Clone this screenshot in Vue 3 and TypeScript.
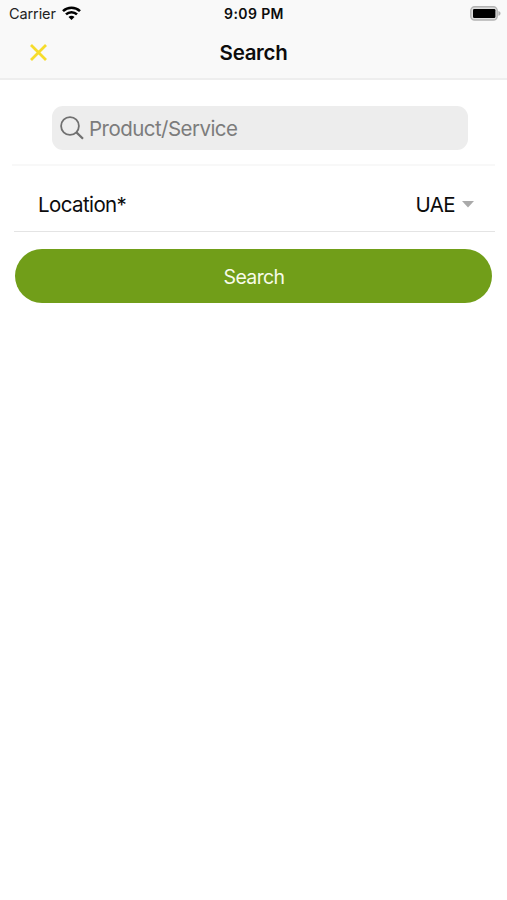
<script setup lang="ts">
import { ref } from 'vue'

const query = ref('')
const location = ref('UAE')
</script>

<template>
  <div class="screen">
    <header class="header">
      <div class="status">
        <div class="carrier">
          <span class="carrier-name">Carrier</span>
          <svg class="wifi" width="19" height="14" viewBox="0 0 19 14" fill="none" stroke="#000" stroke-width="2.6">
            <path d="M1 5.1C5.8.6 13.2.6 18 5.1" />
            <path d="M4 8.4C7 5.5 12 5.5 15 8.4" />
            <path d="M9.5 14L6.5 11C8.2 9.4 10.8 9.4 12.5 11Z" fill="#000" stroke="none" />
          </svg>
        </div>
        <span class="time">9:09 PM</span>
        <svg class="battery" width="31" height="15" viewBox="0 0 31 15">
          <rect x="0.8" y="0.8" width="26.4" height="13.2" rx="3.8" fill="#dedede" stroke="#b2b2b2" stroke-width="1.4" />
          <rect x="3" y="3" width="22.4" height="9" rx="1.2" fill="#000" />
          <path d="M28.4 5.1C31.2 6 31.2 8.8 28.4 9.7Z" fill="#aeaeae" />
        </svg>
      </div>
      <div class="navbar">
        <button class="close" type="button" aria-label="Close">
          <svg width="17" height="17" viewBox="0 0 17 17" fill="none" stroke="#f6dc2c" stroke-width="2.8">
            <path d="M1 1L16 16M16 1L1 16" />
          </svg>
        </button>
        <h1 class="title">Search</h1>
        <span></span>
      </div>
    </header>
    <main class="form">
      <div class="search-row">
        <label class="search-box">
          <svg width="24" height="24" viewBox="0 0 24 24" fill="none" stroke="#707070" stroke-width="1.8">
            <circle cx="10" cy="10" r="8.9" />
            <path d="M16.4 16.4L23 22.8" stroke-width="2.2" />
          </svg>
          <input v-model="query" class="search-input" type="text" placeholder="Product/Service" />
        </label>
      </div>
      <div class="location-row">
        <span class="location-label">Location*</span>
        <span class="location-value">{{ location }}</span>
        <svg class="caret" width="12" height="7" viewBox="0 0 12 7">
          <path d="M0 0H12L6 6.5Z" fill="#aaa" />
        </svg>
      </div>
      <button class="submit" type="button"><span class="submit-text">Search</span></button>
    </main>
  </div>
</template>

<style>
body {
  background: #fff;
}
</style>

<style scoped>
.screen {
  height: 900px;
  background: #fff;
  color: #0c0c0c;
  font-family: Inter, "Liberation Sans", sans-serif;
}
button {
  border: 0;
  font: inherit;
}
.header {
  box-sizing: border-box;
  height: 80px;
  background: #f9f9f9;
  border-bottom: 2px solid #eeeeee;
}
.status,
.navbar {
  display: grid;
  grid-template-columns: 1fr auto 1fr;
  align-items: center;
}
.status {
  height: 27px;
  padding: 0 6px 0 9px;
}
.carrier {
  display: flex;
  align-items: center;
  gap: 6px;
}
.carrier-name {
  font-size: 14.5px;
  line-height: 27px;
  letter-spacing: -0.1px;
  color: #222;
}
.wifi {
  margin-top: -2px;
}
.time {
  margin-right: 2px;
  font-size: 14px;
  font-weight: 600;
  letter-spacing: 0.4px;
}
.battery {
  justify-self: end;
}
.navbar {
  height: 50px;
  padding: 0 30px;
}
.close {
  width: 17px;
  height: 17px;
  padding: 0;
  background: none;
}
.close svg {
  display: block;
}
.title {
  margin: 0;
  padding-top: 1px;
  font-size: 20.5px;
  line-height: 49px;
  font-weight: 600;
  letter-spacing: -0.3px;
}
.form {
  padding: 0 12px;
}
.search-row {
  padding: 26px 27px 14px 40px;
  border-bottom: 2px solid #f8f8f8;
}
.search-box {
  box-sizing: border-box;
  display: flex;
  align-items: center;
  gap: 5px;
  height: 44px;
  padding: 0 8px;
  border-radius: 11px;
  background: #ededed;
}
.search-input {
  flex: 1;
  min-width: 0;
  height: 44px;
  padding: 0;
  border: 0;
  outline: 0;
  background: none;
  font-family: inherit;
  font-size: 20.5px;
  letter-spacing: -0.54px;
}
.search-input::placeholder {
  color: #7c7c7c;
}
.location-row {
  display: flex;
  align-items: center;
  box-sizing: border-box;
  height: 66px;
  margin: 0 0 0 2px;
  padding: 12px 21px 0 24px;
  border-bottom: 1px solid #e4e4e4;
  font-size: 20.5px;
}
.location-label {
  flex: 1;
  letter-spacing: -0.6px;
}
.location-value {
  letter-spacing: -0.6px;
}
.caret {
  margin-left: 7px;
}
.submit {
  display: block;
  width: 477px;
  height: 54px;
  margin: 17px 0 0 3px;
  padding: 1px 0 0 1px;
  border-radius: 27px;
  background: #719e19;
  color: #f7fbe9;
  font-size: 19.5px;
}
.submit-text {
  letter-spacing: -0.65px;
}
</style>
